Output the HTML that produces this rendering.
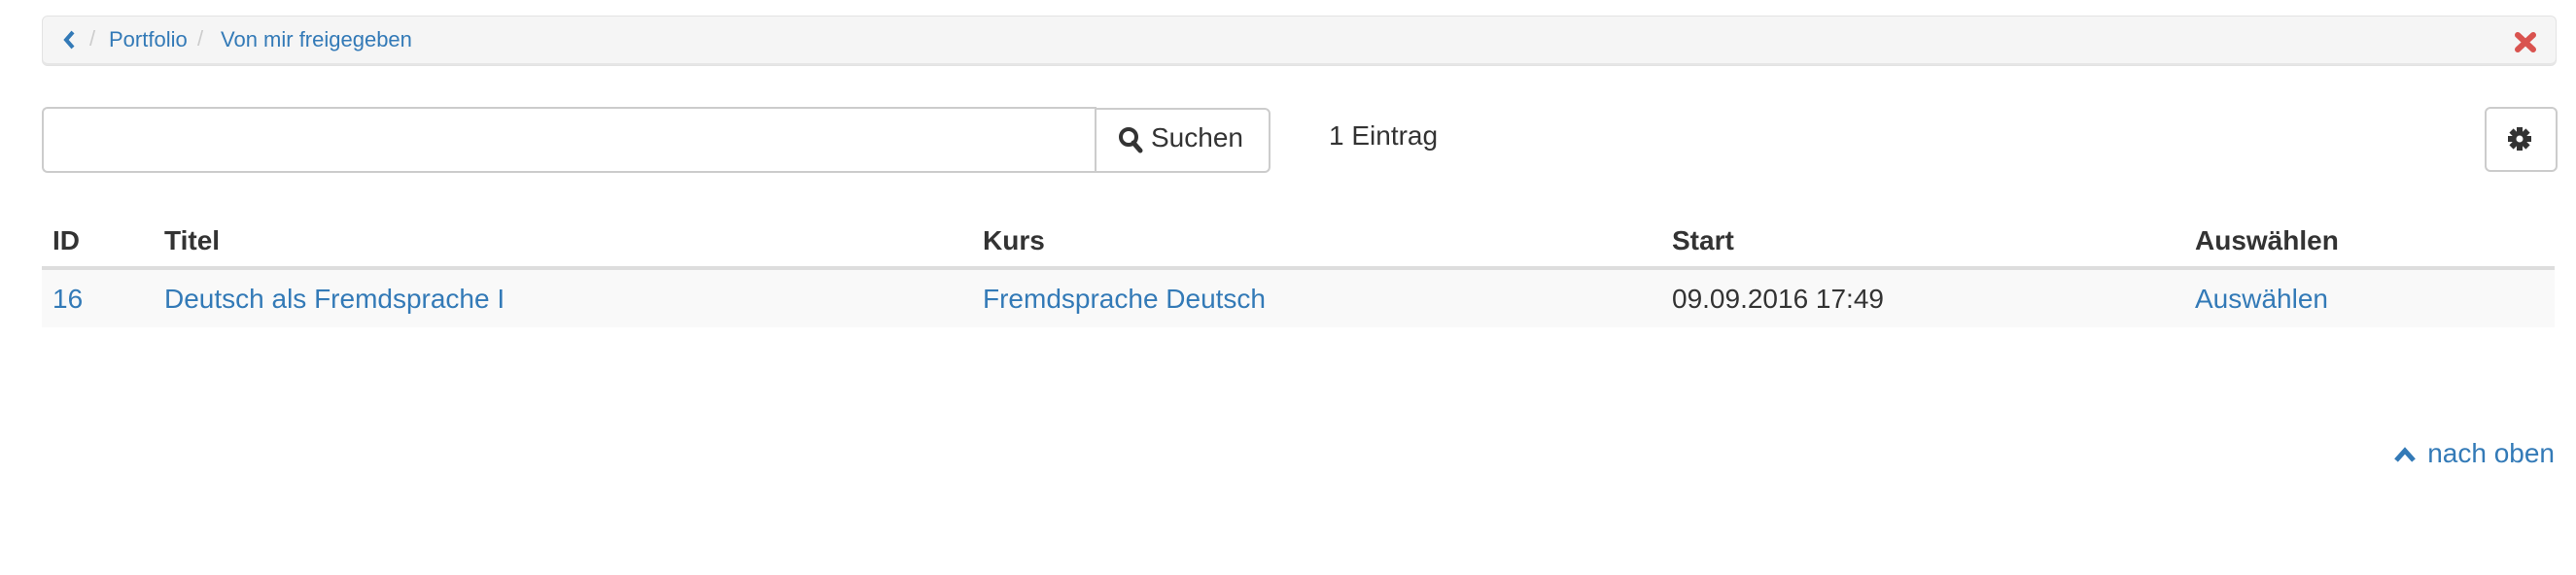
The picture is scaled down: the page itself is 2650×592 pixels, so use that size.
<!DOCTYPE html>
<html><head><meta charset="utf-8"><style>
body{margin:0;width:2650px;height:592px;background:#fff;font-family:"Liberation Sans",Arial,sans-serif;color:#333;position:relative;overflow:hidden}
.a{position:absolute;white-space:nowrap}
.link{color:#337ab7}
</style></head><body>
<div class="a" style="left:43px;top:16px;width:2585px;height:50px;background:#f5f5f5;border:1px solid #e3e3e3;border-radius:6px;box-shadow:inset 0 -2px 0 #e6e6e6"></div>
<svg class="a" style="left:63px;top:30px" width="16" height="22" viewBox="0 0 16 22"><path d="M12 3 L5 11 L12 19" stroke="#337ab7" stroke-width="4" fill="none"/></svg>
<div class="a" style="left:92px;top:27px;font-size:22px;color:#ccc">/</div>
<div class="a link" style="left:112px;top:28px;font-size:22px">Portfolio</div>
<div class="a" style="left:203px;top:27px;font-size:22px;color:#ccc">/</div>
<div class="a link" style="left:227px;top:28px;font-size:22px">Von mir freigegeben</div>
<svg class="a" style="left:2586px;top:32px" width="24" height="23" viewBox="0 0 24 23"><path d="M4 4 L20 19 M20 4 L4 19" stroke="#d9534f" stroke-width="6" stroke-linecap="round"/></svg>

<div class="a" style="left:43px;top:110px;width:1083px;height:64px;border:2px solid #ccc;border-right:none;border-radius:6px 0 0 6px"></div>
<div class="a" style="left:1126px;top:111px;width:177px;height:63px;border:2px solid #ccc;border-radius:0 6px 6px 0;background:#fff"></div>
<svg class="a" style="left:1150px;top:130px" width="26" height="28" viewBox="0 0 26 28"><circle cx="11" cy="11" r="8" stroke="#333" stroke-width="4" fill="none"/><path d="M16 17 L23 25" stroke="#333" stroke-width="5" stroke-linecap="round"/></svg>
<div class="a" style="left:1184px;top:126px;font-size:28px">Suchen</div>
<div class="a" style="left:1367px;top:124px;font-size:28px">1 Eintrag</div>
<div class="a" style="left:2556px;top:110px;width:71px;height:63px;border:2px solid #ccc;border-radius:6px"></div>
<svg class="a" style="left:2579px;top:130px" width="26" height="26" viewBox="0 0 26 26"><g fill="#333"><circle cx="13" cy="13" r="8"/><rect x="10" y="1" width="6" height="24"/><rect x="1" y="10" width="24" height="6"/><rect x="10" y="1" width="6" height="24" transform="rotate(45 13 13)"/><rect x="10" y="1" width="6" height="24" transform="rotate(-45 13 13)"/></g><circle cx="13" cy="13" r="3.5" fill="#fff"/></svg>

<div class="a" style="left:43px;top:274px;width:2585px;height:4px;background:#ddd"></div>
<div class="a" style="left:43px;top:278px;width:2585px;height:59px;background:#f9f9f9"></div>
<div class="a" style="left:54px;top:232px;font-size:28px;font-weight:bold">ID</div>
<div class="a" style="left:169px;top:232px;font-size:28px;font-weight:bold">Titel</div>
<div class="a" style="left:1011px;top:232px;font-size:28px;font-weight:bold">Kurs</div>
<div class="a" style="left:1720px;top:232px;font-size:28px;font-weight:bold">Start</div>
<div class="a" style="left:2258px;top:232px;font-size:28px;font-weight:bold">Auswählen</div>
<div class="a link" style="left:54px;top:292px;font-size:28px">16</div>
<div class="a link" style="left:169px;top:292px;font-size:28px">Deutsch als Fremdsprache I</div>
<div class="a link" style="left:1011px;top:292px;font-size:28px">Fremdsprache Deutsch</div>
<div class="a" style="left:1720px;top:292px;font-size:28px">09.09.2016 17:49</div>
<div class="a link" style="left:2258px;top:292px;font-size:28px">Auswählen</div>

<svg class="a" style="left:2462px;top:458px" width="24" height="20" viewBox="0 0 24 20"><path d="M3 16 L12 6 L21 16" stroke="#337ab7" stroke-width="5" fill="none"/></svg>
<div class="a link" style="right:22px;top:451px;font-size:28px">nach oben</div>
</body></html>
